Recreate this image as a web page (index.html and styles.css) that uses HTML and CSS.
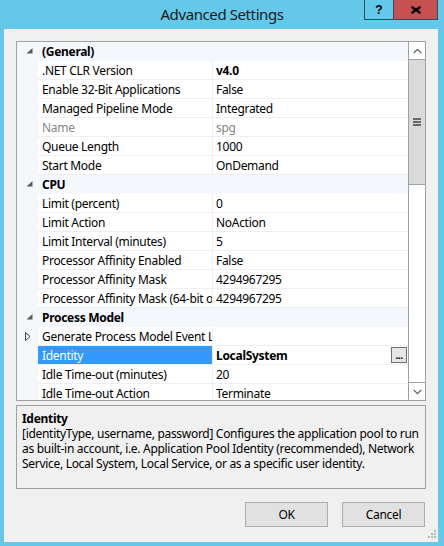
FILE: index.html
```html
<!DOCTYPE html>
<html>
<head>
<meta charset="utf-8">
<title>Advanced Settings</title>
<link rel="stylesheet" href="styles.css">
</head>
<body>
<div class="window">
  <div class="titlebar">
    <div class="title">Advanced Settings</div>
    <div class="caption-buttons">
      <div class="cap-btn help">?</div>
      <div class="cap-btn close">
        <svg width="12" height="8" viewBox="0 0 12 8"><path d="M1.5 0.8 L10.5 7.2 M10.5 0.8 L1.5 7.2" stroke="#000" stroke-width="2.4" fill="none"/></svg>
      </div>
    </div>
  </div>
  <div class="client">
    <div class="grid">
      <div class="rows">
        <div class="row cat"><span class="gutter"><svg class="glyph" width="7" height="6" viewBox="0 0 7 6"><path d="M6.5 0 L6.5 5.5 L0.5 5.5 Z" fill="#595959"/></svg></span><span class="cat-label">(General)</span></div>
        <div class="row"><span class="gutter"></span><span class="name">.NET CLR Version</span><span class="value bold">v4.0</span></div>
        <div class="row"><span class="gutter"></span><span class="name">Enable 32-Bit Applications</span><span class="value">False</span></div>
        <div class="row"><span class="gutter"></span><span class="name">Managed Pipeline Mode</span><span class="value">Integrated</span></div>
        <div class="row"><span class="gutter"></span><span class="name ro">Name</span><span class="value ro">spg</span></div>
        <div class="row"><span class="gutter"></span><span class="name">Queue Length</span><span class="value">1000</span></div>
        <div class="row"><span class="gutter"></span><span class="name">Start Mode</span><span class="value">OnDemand</span></div>
        <div class="row cat"><span class="gutter"><svg class="glyph" width="7" height="6" viewBox="0 0 7 6"><path d="M6.5 0 L6.5 5.5 L0.5 5.5 Z" fill="#595959"/></svg></span><span class="cat-label">CPU</span></div>
        <div class="row"><span class="gutter"></span><span class="name">Limit (percent)</span><span class="value">0</span></div>
        <div class="row"><span class="gutter"></span><span class="name">Limit Action</span><span class="value">NoAction</span></div>
        <div class="row"><span class="gutter"></span><span class="name">Limit Interval (minutes)</span><span class="value">5</span></div>
        <div class="row"><span class="gutter"></span><span class="name">Processor Affinity Enabled</span><span class="value">False</span></div>
        <div class="row"><span class="gutter"></span><span class="name">Processor Affinity Mask</span><span class="value">4294967295</span></div>
        <div class="row"><span class="gutter"></span><span class="name">Processor Affinity Mask (64-bit option)</span><span class="value">4294967295</span></div>
        <div class="row cat"><span class="gutter"><svg class="glyph" width="7" height="6" viewBox="0 0 7 6"><path d="M6.5 0 L6.5 5.5 L0.5 5.5 Z" fill="#595959"/></svg></span><span class="cat-label">Process Model</span></div>
        <div class="row"><span class="gutter"><svg class="glyph-c" width="6" height="9" viewBox="0 0 6 9"><path d="M0.5 0.5 L5 4.5 L0.5 8.5 Z" fill="none" stroke="#404040" stroke-width="1"/></svg></span><span class="name">Generate Process Model Event Log Entry</span><span class="value"></span></div>
        <div class="row selected"><span class="gutter"></span><span class="name">Identity</span><span class="value bold"><span class="val-text">LocalSystem</span><span class="ellipsis">...</span></span></div>
        <div class="row"><span class="gutter"></span><span class="name">Idle Time-out (minutes)</span><span class="value">20</span></div>
        <div class="row"><span class="gutter"></span><span class="name">Idle Time-out Action</span><span class="value">Terminate</span></div>
      </div>
      <div class="scrollbar">
        <div class="sb-btn"><svg width="9" height="6" viewBox="0 0 9 6"><path d="M0.8 5 L4.5 1.3 L8.2 5" stroke="#606060" stroke-width="1.2" fill="none"/></svg></div>
        <div class="sb-thumb"><span class="grip-line"></span><span class="grip-line"></span><span class="grip-line"></span></div>
        <div class="sb-track"></div>
        <div class="sb-btn"><svg width="9" height="6" viewBox="0 0 9 6"><path d="M0.8 1 L4.5 4.7 L8.2 1" stroke="#606060" stroke-width="1.2" fill="none"/></svg></div>
      </div>
    </div>
    <div class="desc">
      <div class="desc-title">Identity</div>
      <div class="desc-text">[identityType, username, password] Configures the application pool to run<br>as built-in account, i.e. Application Pool Identity (recommended), Network<br>Service, Local System, Local Service, or as a specific user identity.</div>
    </div>
    <div class="buttons">
      <button class="btn">OK</button>
      <button class="btn">Cancel</button>
    </div>
    <svg class="size-grip" width="9" height="9" viewBox="0 0 9 9">
      <rect x="6" y="0" width="2" height="2" fill="#B8B8B8"/>
      <rect x="3" y="3" width="2" height="2" fill="#B8B8B8"/>
      <rect x="6" y="3" width="2" height="2" fill="#B8B8B8"/>
      <rect x="0" y="6" width="2" height="2" fill="#B8B8B8"/>
      <rect x="3" y="6" width="2" height="2" fill="#B8B8B8"/>
      <rect x="6" y="6" width="2" height="2" fill="#B8B8B8"/>
    </svg>
  </div>
</div>
</body>
</html>
```

FILE: styles.css
```css
* { box-sizing: border-box; }

html, body {
  margin: 0;
  padding: 0;
}

body {
  background: #63C8E9;
  font-family: "Noto Sans", "DejaVu Sans", sans-serif;
  font-size: 12px;
  letter-spacing: -0.3px;
  color: #000;
}

.window {
  width: 444px;
  height: 546px;
  display: flex;
  flex-direction: column;
}

.titlebar {
  height: 29px;
  flex: none;
  position: relative;
  display: flex;
  justify-content: center;
}

.title {
  font-size: 15px;
  line-height: 28px;
  color: #1a1a1a;
  letter-spacing: -0.4px;
}

.caption-buttons {
  position: absolute;
  top: 0;
  right: 6px;
  display: flex;
}

.cap-btn {
  height: 20px;
  border: 1px solid #2f4b58;
  border-top: none;
  display: flex;
  align-items: center;
  justify-content: center;
}

.help {
  width: 29px;
  border-right: none;
  font-family: "Liberation Sans", sans-serif;
  font-weight: bold;
  font-size: 12px;
  letter-spacing: 0;
}

.close {
  width: 45px;
  background: #C75050;
}

.client {
  flex: 1;
  margin: 0 6px 4px 4px;
  background: #F0F0F0;
  padding: 12px 12px 0 12px;
  position: relative;
}

.grid {
  height: 360px;
  border: 1px solid #A0A0A0;
  background: #fff;
  display: flex;
}

.rows {
  flex: 1;
  overflow: hidden;
  min-width: 0;
}

.row {
  display: flex;
  height: 19px;
  line-height: 17px;
}

.gutter {
  width: 21px;
  flex: none;
  background: #F4F7FC;
  display: flex;
  align-items: center;
  justify-content: center;
}

.glyph {
  margin-left: 3px;
  margin-top: -2px;
}

.glyph-c {
  margin-left: 1px;
  margin-top: -1px;
}

.cat {
  background: #F4F7FC;
}

.cat-label {
  font-weight: bold;
  padding-left: 4px;
  padding-top: 1px;
  line-height: 18px;
}

.name {
  width: 175px;
  flex: none;
  padding-left: 4px;
  padding-top: 1px;
  border-right: 1px solid #EDEFF3;
  border-bottom: 1px solid #EDEFF3;
  white-space: nowrap;
  overflow: hidden;
}

.value {
  flex: 1;
  padding-left: 3px;
  padding-top: 1px;
  border-bottom: 1px solid #EDEFF3;
  white-space: nowrap;
  overflow: hidden;
  display: flex;
  align-items: center;
}

.bold { font-weight: bold; }

.ro { color: #858585; }

.selected .name {
  background: #3399FF;
  color: #fff;
}

.val-text { flex: 1; }

.ellipsis {
  width: 16px;
  height: 16px;
  margin-right: 1px;
  margin-top: -1px;
  border: 1px solid #6E6E6E;
  background: #E6E6E6;
  font-weight: bold;
  font-size: 10px;
  line-height: 14px;
  text-align: center;
  letter-spacing: -0.5px;
}

.scrollbar {
  width: 17px;
  flex: none;
  border-left: 1px solid #A0A0A0;
  display: flex;
  flex-direction: column;
}

.sb-btn {
  height: 17px;
  flex: none;
  display: flex;
  align-items: center;
  justify-content: center;
}

.sb-thumb {
  height: 126px;
  flex: none;
  background: #DADADA;
  border-top: 1px solid #A0A0A0;
  border-bottom: 1px solid #A0A0A0;
  display: flex;
  flex-direction: column;
  align-items: center;
  justify-content: center;
  gap: 1px;
}

.grip-line {
  width: 8px;
  height: 2px;
  background: #6A6A6A;
}

.sb-track {
  flex: 1;
  border-bottom: 1px solid #A0A0A0;
}

.desc {
  margin-top: 4px;
  height: 84px;
  border: 1px solid #A0A0A0;
  padding: 5px 5px 0 5px;
  line-height: 15px;
}

.desc-title {
  font-weight: bold;
  margin-bottom: 0;
}

.buttons {
  margin-top: 13px;
  display: flex;
  justify-content: flex-end;
  gap: 14px;
  padding-right: 1px;
}

.btn {
  width: 83px;
  height: 25px;
  background: #E1E1E1;
  border: 1px solid #ADADAD;
  font-family: inherit;
  font-size: 12px;
  letter-spacing: -0.3px;
  color: #000;
  padding: 0;
}

.size-grip {
  position: absolute;
  right: 1px;
  bottom: 3px;
}
```
